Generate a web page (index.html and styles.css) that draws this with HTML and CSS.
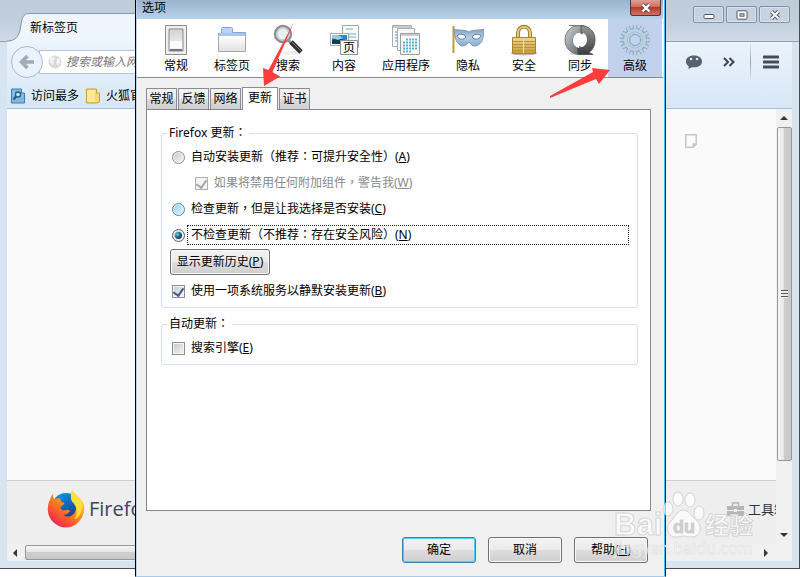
FILE: index.html
```html
<!DOCTYPE html>
<html lang="zh-CN">
<head>
    <meta charset="UTF-8">
    <meta name="viewport" content="width=device-width, initial-scale=1.0">
    <title>选项</title>
    <link rel="stylesheet" href="styles.css">
</head>
<body>
    <!-- 浏览器窗口 -->
    <div class="browser">
        <div class="browser-title">
            <div class="browser-tab">
                <svg class="tab-curve" width="22" height="29" viewBox="0 0 22 29">
                    <path d="M0 28.500C9 28 13 24 14 15C15 6 16 .5 22 .5V29H0z" fill="#eff5fc"/>
                    <path d="M0 28C8 28 12 24 13.500 14C15 5 16 .5 22 .5" fill="none" stroke="#8799ae"/>
                </svg>
                <span class="tab-text">新标签页</span>
            </div>
            <div class="window-btns">
                <button class="window-btn" aria-label="最小化">
                    <svg width="14" height="10" viewBox="0 0 14 10"><rect x="2" y="4.500" width="10" height="4" rx="1" fill="#fff" stroke="#535666"/></svg>
                </button>
                <button class="window-btn" aria-label="最大化">
                    <svg width="14" height="10" viewBox="0 0 14 10"><rect x="2" y=".8" width="10" height="8.400" rx="1" fill="#fff" stroke="#535666"/><rect x="5" y="3.800" width="4" height="2.400" fill="#d5dfeb" stroke="#535666"/></svg>
                </button>
                <button class="window-btn" aria-label="关闭窗口">
                    <svg width="14" height="10" viewBox="0 0 14 10"><path d="M3.500 1.500l7 7M10.500 1.500l-7 7" stroke="#535666" stroke-width="4"/><path d="M3.500 1.500l7 7M10.500 1.500l-7 7" stroke="#fff" stroke-width="2"/></svg>
                </button>
            </div>
        </div>

        <div class="browser-tools">
            <div class="nav-bar">
                <button class="back-btn" aria-label="后退">
                    <svg width="16" height="16" viewBox="0 0 16 16"><path d="M8.500 2L2.500 8l6 6M3 8h12" fill="none" stroke="#a0abb8" stroke-width="3.600"/></svg>
                </button>
                <div class="url-box">
                    <svg width="14" height="14" viewBox="0 0 14 14"><circle cx="7" cy="7" r="6.500" fill="#dadada"/><path d="M2 3l4-1 1 2-2 2 1 2-2 2-2-3zM9 3l3 1v4l-2 3-2-3 1-2z" fill="#f4f4f4"/></svg>
                    <input type="text" class="url-input" aria-label="地址" placeholder="搜索或输入网址">
                </div>
                <div class="nav-icons">
                    <svg width="18" height="15" viewBox="0 0 18 15"><path d="M9 .5C4 .5 1 3 1 6.500c0 2 1 3.700 2.800 4.700L3.500 14l3.500-1.800C13 12.700 17 10.500 17 6.500 17 3 14 .5 9 .5z" fill="#56616e"/><circle cx="6" cy="4" r="1.300" fill="#dce6f1"/><circle cx="12" cy="4" r="1.300" fill="#dce6f1"/></svg>
                    <svg width="12" height="10" viewBox="0 0 12 10"><path d="M1 1l4 4-4 4M6.500 1l4 4-4 4" fill="none" stroke="#3e4650" stroke-width="2"/></svg>
                    <span class="nav-line"></span>
                    <svg width="16" height="14" viewBox="0 0 16 14"><path d="M1 2h14M1 7h14M1 12h14" stroke="#454d58" stroke-width="3" stroke-linecap="round"/></svg>
                </div>
            </div>
            <div class="bookmarks">
                <a href="#"><svg width="14" height="16" viewBox="0 0 14 16"><path d="M.5 1h10v4h3v10H.5z" fill="#82b9dc" stroke="#3a7dae"/><circle cx="7" cy="6.500" r="2.500" fill="#c6e3f5" stroke="#235b88" stroke-width="1.300"/><path d="M5 8.500L2.500 11.500" stroke="#235b88" stroke-width="2"/></svg>访问最多</a>
                <a href="#"><svg width="14" height="16" viewBox="0 0 14 16"><path d="M.5 1h10v4h3v9l-3 1H.5z" fill="#f5da72" stroke="#c79f35"/><path d="M1 2h8v12H1z" fill="#fbe798"/></svg>火狐官</a>
            </div>
        </div>

        <div class="browser-main">
            <div class="page">
                <div class="page-body">
                    <svg class="page-icon" width="12" height="14" viewBox="0 0 12 14"><path d="M.8.800h10.400v9.400l-3 3H.8zM8.200 13v-3h3" fill="#fbfbfb" stroke="#c4c8cd" stroke-width="1.500"/></svg>
                </div>
                <div class="page-footer">
                    <svg width="38" height="38" viewBox="0 0 38 38">
                        <defs>
                            <linearGradient id="fox" x1=".8" y1=".1" x2=".2" y2=".9"><stop offset="0" stop-color="#ffd43a"/><stop offset=".45" stop-color="#ff8a16"/><stop offset="1" stop-color="#f0264f"/></linearGradient>
                            <linearGradient id="globe" x1="0" y1="0" x2=".6" y2="1"><stop offset="0" stop-color="#00a4ef"/><stop offset="1" stop-color="#22348f"/></linearGradient>
                        </defs>
                        <circle cx="19" cy="17" r="14" fill="url(#globe)"/>
                        <path d="M6 4c0 2 .5 4 1.500 5 2-1 4-1 6-.5 0 3 1 4 4 4.500-.5 2-3 3-4 4 0 3 3 4 6 3 2-.5 3 .5 3.500 1.500-2 1-3 3.500-7 3.500 6 4 12 0 13-6 .7-4-1-7-4-10C25 6 24 3 25 .5c3 2 5 6 8 8 3 3 5 7 4 12C36 30 28 37.500 19 37.500S1 30 .8 20C.6 15 2 11 3.500 9 3.500 7 4.500 5 6 4z" fill="url(#fox)"/>
                        <path d="M25 .5c3 2 5 6 8 8 3 4 3 9 1 14-1 3-4 6-7 7 4-5 4-12-2-18C23 8 24 3 25 .5z" fill="#ffdf3c"/>
                    </svg>
                    <span class="brand">Firefox</span>
                    <svg class="toolbox" width="17" height="14" viewBox="0 0 17 14"><path d="M0 4h17v4H0zM0 9h17v5H0z" fill="#b4b6b8"/><path d="M5.500 4V1h6v3" fill="none" stroke="#b4b6b8" stroke-width="1.500"/><path d="M7 7h3v3H7z" fill="#eee"/></svg>
                    <a href="#" class="tool-link">工具箱</a>
                </div>
            </div>
            <div class="scroll-v">
                <span class="arrow up"></span>
                <span class="thumb-v"></span>
                <span class="arrow down"></span>
            </div>
        </div>
        <div class="scroll-h">
            <span class="arrow left"></span>
            <span class="thumb-h"></span>
            <span class="arrow right"></span>
        </div>
    </div>

    <!-- 选项对话框 -->
    <div class="dialog">
        <div class="dialog-title">
            <span>选项</span>
            <button class="close-btn" aria-label="关闭">
                <svg width="12" height="10" viewBox="0 0 12 10"><path d="M2.500 1.500l7 7M9.500 1.500l-7 7" stroke="#63434b" stroke-width="4"/><path d="M2.500 1.500l7 7M9.500 1.500l-7 7" stroke="#fff" stroke-width="2.400"/></svg>
            </button>
        </div>

        <div class="categories">
            <button class="category">
                <svg width="32" height="32" viewBox="0 0 32 32"><defs><linearGradient id="sw" x2="0" y2="1"><stop offset="0" stop-color="#d2d2d2"/><stop offset="1" stop-color="#f7f7f7"/></linearGradient></defs><path d="M5.500 1.500h21v29h-21z" fill="#eee" stroke="#8e8e8e"/><path d="M9 5h14v22H9z" fill="url(#sw)" stroke="#8b8b8b"/><path d="M10 17h12v7H10z" fill="#fafafa"/><path d="M10 25h12v2H10z" fill="#777"/></svg>
                <span>常规</span>
            </button>
            <button class="category">
                <svg width="32" height="32" viewBox="0 0 32 32"><defs><linearGradient id="tb" x2="0" y2="1"><stop offset="0" stop-color="#fff"/><stop offset="1" stop-color="#e1e1e1"/></linearGradient></defs><path d="M5.500 13V4.500l1-1h9l1 1v4h13V13H2.500V9z" fill="#b9d4f6" stroke="#85a5cc"/><path d="M2.500 11.500h27v16h-27z" fill="url(#tb)" stroke="#a6a6a6"/><path d="M3 9h26v3H3z" fill="#a8c7ef"/></svg>
                <span>标签页</span>
            </button>
            <button class="category">
                <svg width="32" height="32" viewBox="0 0 32 32"><ellipse cx="20" cy="29" rx="10" ry="2" fill="#eee"/><path d="M16 16l5 5" stroke="#999" stroke-width="3"/><path d="M19 18l10 10" stroke="#333" stroke-width="5"/><path d="M20 18l9 9" stroke="#777"/><circle cx="11" cy="10" r="8" fill="#eaf0f5" stroke="#8c9095" stroke-width="2.500"/><circle cx="11" cy="10" r="6" fill="none" stroke="#c9cdd1" stroke-width="1.500"/></svg>
                <span>搜索</span>
            </button>
            <button class="category">
                <svg width="32" height="32" viewBox="0 0 32 32"><path d="M14.500 1.500h16v22h-16z" fill="#f6f9fa" stroke="#a3a8ab"/><path d="M18 5h7M18 10h10M18 13h10" stroke="#82aeb4"/><path d="M2.500 9.500h18v12h-18z" fill="#fff" stroke="#a3a8ab"/><path d="M4 11h15v9H4z" fill="#2887ce"/><path d="M4 16l6-2 9 3v3H4z" fill="#173f51"/><path d="M4 11h6l5 3-5 2-6-2z" fill="#8bcef1"/><path d="M12.500 16.500h17v14h-17z" fill="#fafafa" stroke="#8e9295"/><text class="page-char" x="15" y="28">页</text></svg>
                <span>内容</span>
            </button>
            <button class="category wide">
                <svg width="32" height="32" viewBox="0 0 32 32"><path d="M2.500 1.500h19v21h-19z" fill="#f8f8f8" stroke="#a9adb1"/><path d="M3 3h18" stroke="#c6cbcf" stroke-width="2"/><path d="M5 8h4M5 11h4M5 14h4M5 17h4" stroke="#94b3d3" stroke-width="1.500"/><path d="M7.500 4.500h17v22h-17z" fill="#f5f7f8" stroke="#a9adb1"/><path d="M10.500 9.500h19v21h-19z" fill="#fafafa" stroke="#979ca0"/><path d="M11 11h18" stroke="#ccc" stroke-width="2"/><path d="M16 15.500h11M13 18.500h14M13 21.500h14M13 24.500h14M13 27.500h8" stroke="#55b5d9" stroke-width="2" stroke-dasharray="2 1"/></svg>
                <span>应用程序</span>
            </button>
            <button class="category">
                <svg width="32" height="32" viewBox="0 0 32 32"><defs><linearGradient id="mk" x2="0" y2="1"><stop offset="0" stop-color="#84a3c6"/><stop offset=".5" stop-color="#b4cce6"/><stop offset="1" stop-color="#8aa9cd"/></linearGradient></defs><path d="M1.500 2v27" stroke="#c29b35" stroke-width="2"/><path d="M2 5c4 2 10 0 15 3 5-3 10-1 15-3-1 6 0 13-6 16-4 2-6 1-9-3-3 4-6 5-9 3C3 18 3 11 2 5z" fill="url(#mk)" stroke="#7c94b0"/><path d="M5 12c3-3 7-2 9 1-2 3-7 3-9-1zM20 13c2-3 6-4 9-1-2 4-7 4-9 1z" fill="#fff" stroke="#5f7b99"/></svg>
                <span>隐私</span>
            </button>
            <button class="category">
                <svg width="32" height="32" viewBox="0 0 32 32"><defs><linearGradient id="lk" x2="0" y2="1"><stop offset="0" stop-color="#efd88a"/><stop offset="1" stop-color="#c49b3c"/></linearGradient></defs><ellipse cx="16" cy="29" rx="13" ry="2.500" fill="#bbb"/><path d="M10 14V9c0-8.500 12-8.500 12 0v5" fill="none" stroke="#a08038" stroke-width="4"/><path d="M10 14V9c0-8 12-8 12 0v5" fill="none" stroke="#e4ca74" stroke-width="2"/><path d="M4.500 13.500h23v16h-23z" fill="url(#lk)" stroke="#a88432"/><path d="M5 17.500h10M5 20.500h10M5 23.500h10M5 26.500h10M16 17.500h11M16 20.500h11M16 23.500h11M16 26.500h11" stroke="#b8923c"/><path d="M15.500 14v15" stroke="#f3dfa0"/></svg>
                <span>安全</span>
            </button>
            <button class="category">
                <svg width="32" height="32" viewBox="0 0 32 32"><defs><linearGradient id="sy" x2="1" y2="1"><stop offset="0" stop-color="#d4d7d9"/><stop offset="1" stop-color="#55585a"/></linearGradient><linearGradient id="sz" x2="0" y2="1"><stop offset="0" stop-color="#999"/><stop offset="1" stop-color="#3a3c3e"/></linearGradient></defs><ellipse cx="17" cy="30" rx="13" ry="1.500" fill="#ddd"/><path d="M15 30.500C6 30 1 23 1 16 1 8 7 2 14 1.500L5 1.500h15l-1 13-4-5c-4 1-6 4-6 7 0 4 3 7 8 8z" fill="url(#sy)" stroke="#777b7e"/><path d="M17 1.500c9 .5 14 7 14 14 0 6-2 10-6 13l4 2H14l-1-11 4 4c4-1 6-4 6-8 0-3-2-6-6-7z" fill="url(#sz)" stroke="#55585b"/><path d="M16 9l2 2 1-2c3 1 4 4 4 7s-2 6-5 7l-2-2-1 3c-4-1-6-4-6-8 0-3 2-6 5-7z" fill="#fff"/></svg>
                <span>同步</span>
            </button>
            <button class="category selected">
                <svg width="32" height="32" viewBox="0 0 32 32">
                    <defs><path id="teeth" d="M16 1v30M1 16h30M8.500 3l15 26M3 8.500l26 15M3 23.500l26-15M8.500 29l15-26"/></defs>
                    <use href="#teeth" stroke="#84a0ba" stroke-width="4.400"/>
                    <circle cx="16" cy="16" r="12" fill="#84a0ba"/>
                    <use href="#teeth" stroke="#bdd2e2" stroke-width="2.600"/>
                    <circle cx="16" cy="16" r="11" fill="#bdd2e2"/>
                    <circle cx="16" cy="16" r="8" fill="none" stroke="#a8c0d5"/>
                    <circle cx="16" cy="16" r="5.500" fill="#c2d1ee" stroke="#84a0ba"/>
                </svg>
                <span>高级</span>
            </button>
        </div>

        <div class="dialog-body">
            <div class="tabs">
                <button class="tab">常规</button>
                <button class="tab">反馈</button>
                <button class="tab">网络</button>
                <button class="tab active">更新</button>
                <button class="tab">证书</button>
            </div>

            <form class="panel" id="options">
                <fieldset class="group">
                    <legend>Firefox 更新：</legend>
                    <div class="row">
                        <input type="radio" name="update" id="auto">
                        <label for="auto">自动安装更新（推荐：可提升安全性）(<u>A</u>)</label>
                    </div>
                    <div class="row sub">
                        <input type="checkbox" id="warn" checked disabled>
                        <label for="warn">如果将禁用任何附加组件，警告我(<u>W</u>)</label>
                    </div>
                    <div class="row">
                        <input type="radio" name="update" id="check" class="hot">
                        <label for="check">检查更新，但是让我选择是否安装(<u>C</u>)</label>
                    </div>
                    <div class="row">
                        <input type="radio" name="update" id="never" checked>
                        <label for="never" class="focused">不检查更新（不推荐：存在安全风险）(<u>N</u>)</label>
                    </div>
                    <button type="button" class="btn history">显示更新历史(<u>P</u>)</button>
                    <div class="row">
                        <input type="checkbox" id="service" checked>
                        <label for="service">使用一项系统服务以静默安装更新(<u>B</u>)</label>
                    </div>
                </fieldset>

                <fieldset class="group">
                    <legend>自动更新：</legend>
                    <div class="row">
                        <input type="checkbox" id="engine">
                        <label for="engine">搜索引擎(<u>E</u>)</label>
                    </div>
                </fieldset>
            </form>

            <div class="actions">
                <button class="btn default" type="submit" form="options">确定</button>
                <button class="btn">取消</button>
                <button class="btn">帮助(<u>H</u>)</button>
            </div>
        </div>
    </div>

    <!-- 标注箭头 -->
    <svg class="note note-tab" width="34" height="66" viewBox="0 0 34 66"><path d="M33 1L11.500 51l7.500 4.500L3 65 2 47l5.500 2z" fill="#fb3d3b"/></svg>
    <svg class="note note-category" width="64" height="32" viewBox="0 0 64 32"><path d="M1 29L44 5l-1-4 18 2-11 14-3-5L1 31z" fill="#fb3d3b"/></svg>

    <!-- 水印 -->
    <svg class="watermark" width="144" height="72" viewBox="0 0 144 72">
        <g class="mark">
            <text x="2" y="46" class="mark-big">Bai</text>
            <ellipse cx="66" cy="10" rx="5" ry="7"/>
            <ellipse cx="78" cy="11" rx="5" ry="7"/>
            <ellipse cx="56" cy="20" rx="5" ry="7"/>
            <ellipse cx="87" cy="24" rx="5" ry="7"/>
            <path d="M71 21c-6 0-7 7-12 11-6 5-4 16 4 16 4 0 5-1 8-1s5 1 9 1c8 0 11-10 5-16-5-4-8-11-14-11z"/>
            <text x="61" y="44" class="mark-du">du</text>
            <text x="93" y="45" class="mark-cn">经验</text>
        </g>
        <text x="2" y="65" class="mark-url">jingyan.baidu.com</text>
    </svg>
</body>
</html>
```
FILE: styles.css
```css
* {
    box-sizing: border-box;
}

body {
    margin: 0;
    position: relative;
    height: 100vh;
    overflow: hidden;
    background: #fff;
    font-family: "Noto Sans", "Noto Sans CJK SC", sans-serif;
    font-size: 12px;
    line-height: 18px;
    color: #000;
}

button,
input {
    font: inherit;
    color: inherit;
    margin: 0;
    padding: 0;
}

a {
    color: inherit;
    text-decoration: none;
}

svg {
    display: block;
    flex: none;
}

/* 浏览器窗口 */
.browser {
    display: flex;
    flex-direction: column;
    height: calc(100vh - 8px);
    padding: 0 7px 7px;
    border-right: 1px solid #4a4a4f;
    border-bottom: 1px solid #4a4a4f;
    background: #d7e4f1;
}

.browser-title {
    display: flex;
    justify-content: space-between;
    align-items: flex-start;
    height: 42px;
    margin: 0 -7px;
    padding-left: 7px;
    background: linear-gradient(#bfccd9, #c1cedc 50%, #cfdbe9);
    border-bottom: 1px solid #8c9eb3;
}

.browser-tab {
    display: flex;
    width: 180px;
    height: 29px;
    margin-top: 13px;
}

.tab-text {
    flex: 1;
    padding: 5px 0 0 1px;
    border-top: 1px solid #8799ae;
    background: #eff5fc;
}

.window-btns {
    display: flex;
    gap: 2px;
    padding: 6px 9px;
}

.window-btn {
    display: flex;
    justify-content: center;
    align-items: center;
    width: 31px;
    height: 17px;
    border: 1px solid #8090ad;
    border-radius: 2px;
    background: #c6d2e0;
    box-shadow: inset 0 0 0 1px #d6e0eb;
}

.browser-tools {
    height: 67px;
    background: linear-gradient(#ebf3fb, #d7e7f7);
    border-bottom: 1px solid #a5bdd8;
}

.nav-bar {
    display: flex;
    align-items: center;
    height: 40px;
    padding: 0 13px 0 4px;
}

.back-btn {
    display: flex;
    justify-content: center;
    align-items: center;
    flex: none;
    width: 32px;
    height: 32px;
    border: 1px solid #a9bacd;
    border-radius: 50%;
    background: #ebf2fa;
    z-index: 1;
}

.url-box {
    display: flex;
    align-items: center;
    gap: 4px;
    width: 500px;
    height: 24px;
    margin-left: -4px;
    padding-left: 8px;
    border: 1px solid #b6c6d8;
    background: #fff;
}

.url-input {
    flex: 1;
    border: none;
    outline: none;
    background: none;
    font-style: italic;
}

.url-input::placeholder {
    color: #777;
}

.nav-icons {
    display: flex;
    align-items: center;
    gap: 20px;
    margin-left: auto;
}

.nav-line {
    width: 1px;
    height: 36px;
    margin: 0 -8px 0 -5px;
    background: linear-gradient(#dce6f1, #8fa3ba, #dce6f1);
}

.bookmarks {
    display: flex;
    gap: 7px;
    padding: 5px 4px;
}

.bookmarks a {
    display: flex;
    align-items: center;
    gap: 6px;
    white-space: nowrap;
}

.browser-main {
    display: flex;
    flex: 1;
    min-height: 0;
}

.page {
    display: flex;
    flex-direction: column;
    flex: 1;
    min-width: 0;
    background: #fafafa;
}

.page-body {
    flex: 1;
    padding: 25px 79px;
}

.page-icon {
    margin-left: auto;
}

.page-footer {
    display: flex;
    align-items: center;
    height: 64px;
    padding: 0 0 8px 40px;
    border-top: 1px solid #cfcfcf;
    background: #eee;
    overflow: hidden;
}

.brand {
    margin-left: 4px;
    font-family: "Open Sans", sans-serif;
    font-size: 20px;
    color: #42435a;
}

.toolbox {
    margin-left: auto;
}

.tool-link {
    width: 28px;
    margin-left: 4px;
    overflow: hidden;
    white-space: nowrap;
    font-size: 13px;
    color: #333;
}

/* 滚动条 */
.scroll-v {
    display: flex;
    flex-direction: column;
    align-items: center;
    justify-content: space-between;
    width: 16px;
    padding: 7px 0;
    background: #f0f0f0;
}

.thumb-v,
.thumb-h {
    display: flex;
    justify-content: center;
    align-items: center;
    border: 1px solid #979797;
    border-radius: 2px;
}

.thumb-v {
    width: 15px;
    height: 334px;
    margin-bottom: 66px;
    background: linear-gradient(90deg, #f5f5f5, #e6e6e6 45%, #cdcdcd 50%, #c8c8c8);
}

.thumb-v::after {
    content: "";
    width: 7px;
    height: 8px;
    background: repeating-linear-gradient(#555 0 1px, #eee 1px 3px);
}

.scroll-h {
    display: flex;
    align-items: center;
    height: 17px;
    padding: 0 24px 0 6px;
    background: #f0f0f0;
}

.thumb-h {
    flex: 1;
    height: 15px;
    margin: 0 130px 0 8px;
    background: linear-gradient(#f5f5f5, #e6e6e6 45%, #cdcdcd 50%, #c8c8c8);
}

.arrow {
    width: 0;
    height: 0;
    border: 4px solid transparent;
}

.up {
    border-top-width: 0;
    border-bottom-color: #333;
}

.down {
    border-bottom-width: 0;
    border-top-color: #333;
}

.left {
    border-left-width: 0;
    border-right-color: #333;
}

.right {
    border-right-width: 0;
    border-left-color: #333;
}

/* 对话框 */
.dialog {
    position: absolute;
    top: 0;
    bottom: 0;
    left: 135px;
    right: 134px;
    display: flex;
    flex-direction: column;
    padding: 0 2px 0 1px;
    border: 1px solid #000;
    border-top: none;
    border-bottom: 1px solid #a9cbe9;
    border-right-color: #16232b;
    box-shadow: inset -1px 0 #35c5f4, inset 1px 0 #b9d1ea;
    background: #f0f0f0;
}

.dialog-title {
    display: flex;
    justify-content: space-between;
    height: 19px;
    padding: 0 2px 0 5px;
    line-height: 16px;
    background: linear-gradient(#9bb4ce, #b9d1ea);
}

.close-btn {
    display: flex;
    justify-content: center;
    align-items: center;
    width: 31px;
    height: 16px;
    border: 1px solid #5d2f36;
    border-top: none;
    border-radius: 0 0 3px 3px;
    background: linear-gradient(#dfa095, #cf6d60 45%, #b73a29 50%, #cf7462);
}

.categories {
    display: flex;
    flex: none;
    height: 59px;
    padding-left: 11px;
    border-bottom: 1px solid #868a91;
    background: #fff;
}

.category {
    display: flex;
    flex-direction: column;
    align-items: center;
    gap: 1px;
    width: 56px;
    padding-top: 5px;
    border: none;
    background: none;
    white-space: nowrap;
}

.category.wide {
    width: 68px;
}

.category.selected {
    width: 54px;
    background: #c2d1ee;
}

.page-char {
    font-family: "Noto Sans CJK SC", sans-serif;
    font-size: 12px;
}

.dialog-body {
    display: flex;
    flex-direction: column;
    flex: 1;
    padding: 9px 12px 13px 9px;
}

.tabs {
    display: flex;
    align-items: flex-end;
    gap: 1px;
    height: 22px;
}

.tab {
    width: 31px;
    height: 21px;
    border: 1px solid #8a8a94;
    border-bottom: none;
    background: linear-gradient(#f2f2f2, #ebebeb 48%, #dcdcdc 52%, #cfcfcf);
    line-height: 18px;
}

.tab.active {
    width: 36px;
    height: 23px;
    margin-bottom: -1px;
    padding-bottom: 3px;
    background: #fff;
    z-index: 1;
}

.panel {
    flex: 1;
    padding: 14px 12px 12px 14px;
    border: 1px solid #828790;
    background: #fff;
}

/* 冒号、逗号居中显示 */
.group {
    min-width: 0;
    margin: 0 0 7px;
    padding: 5px 8px 6px;
    border: 1px solid #d5dfe5;
    border-radius: 3px;
    font-family: "Noto Sans", "Noto Sans CJK TC", sans-serif;
    font-feature-settings: "locl" 0;
}

.group legend {
    margin-left: -3px;
    padding: 0 3px 0 2px;
}

.row {
    display: flex;
    align-items: center;
    gap: 2px;
    height: 20px;
    margin: 0 0 6px 2px;
}

.row:last-child {
    margin-bottom: 0;
}

.row.sub {
    padding-left: 23px;
    color: #888;
}

.row label {
    padding: 0 3px;
    border: 1px solid transparent;
}

.row .focused {
    flex: 1;
    border: 1px dotted #222;
}

.row input {
    appearance: none;
    display: grid;
    place-items: center;
    flex: none;
    width: 13px;
    height: 13px;
    border: 1px solid #8e8f8f;
    background: linear-gradient(135deg, #c4c8ce, #f6f6f6);
    box-shadow: inset 0 0 0 1px #f4f4f4;
}

.row input[type="radio"] {
    border-radius: 50%;
}

.row .hot {
    border-color: #4a86aa;
    background: linear-gradient(135deg, #8ccdf0, #e6f7fe);
}

.row input[type="radio"]:checked {
    border-color: #555d66;
}

.row input[type="radio"]:checked::after {
    content: "";
    width: 7px;
    height: 7px;
    border-radius: 50%;
    background: radial-gradient(circle at 35% 35%, #72c8e8, #175477 50%, #0a2d44);
}

.row input[type="checkbox"]:checked::after {
    content: "";
    width: 5px;
    height: 8px;
    margin-bottom: 3px;
    border: solid #42558f;
    border-width: 0 2px 2px 0;
    transform: rotate(35deg);
}

.row input[type="checkbox"]:disabled {
    border-color: #b1b1b1;
    background: #f5f5f5;
}

.row input[type="checkbox"]:disabled::after {
    border-color: #a5a5a5;
}

.btn {
    width: 74px;
    height: 26px;
    border: 1px solid #707070;
    border-radius: 3px;
    background: linear-gradient(#f2f2f2, #ebebeb 48%, #dddddd 52%, #cfcfcf);
    box-shadow: inset 0 0 0 1px #fafafa;
    white-space: nowrap;
}

.btn.history {
    display: block;
    width: 100px;
    margin: -2px 0 6px;
}

.btn.default {
    border-color: #3c7fb1;
    box-shadow: inset 0 0 0 1px #48d0f8;
}

.actions {
    display: flex;
    justify-content: flex-end;
    gap: 12px;
    padding: 26px 3px 0 0;
}

/* 箭头和水印 */
.note,
.watermark {
    position: absolute;
    pointer-events: none;
}

.note-tab {
    top: 21px;
    left: 261px;
}

.note-category {
    top: 67px;
    right: 187px;
}

.watermark {
    right: 44px;
    bottom: 16px;
}

.mark {
    fill: rgba(255, 255, 255, 0.7);
    stroke: rgba(190, 190, 190, 0.6);
    stroke-width: 1px;
}

.mark-big {
    font-family: "Liberation Sans", sans-serif;
    font-size: 31px;
    font-weight: bold;
}

.mark-du {
    font-family: "Liberation Sans", sans-serif;
    font-size: 18px;
    font-weight: bold;
    fill: #d4d4d4;
}

.mark-cn {
    font-family: "Noto Sans CJK SC", sans-serif;
    font-size: 24px;
    font-weight: bold;
}

.mark-url {
    font-family: "Noto Sans", sans-serif;
    font-size: 16px;
    fill: rgba(255, 255, 255, 0.8);
    stroke: rgba(190, 190, 190, 0.3);
}
```
